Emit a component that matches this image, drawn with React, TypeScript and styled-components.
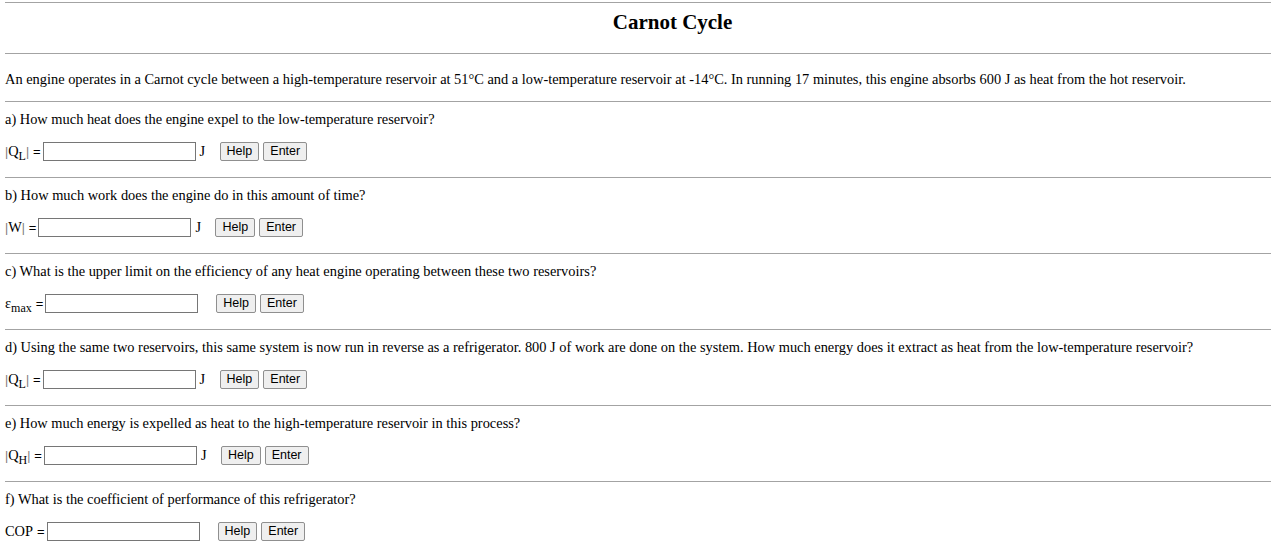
import React, {FC, ReactNode} from 'react';
import styled, {createGlobalStyle} from 'styled-components';

const GlobalStyle = createGlobalStyle`
    html, body {
        margin: 0;
        padding: 0;
        background: #ffffff;
        overflow: hidden;
    }
    body {
        font-family: 'Liberation Serif', 'Times New Roman', serif;
        font-size: 14.4px;
        color: #000000;
    }
`;

const Page = styled.div`
    width: 1335px;
    padding-left: 5px;
    padding-top: 2px;
`;

const Rule = styled.div`
    height: 0;
    border-top: 1px solid #a3a3a3;
`;

const Title = styled.h1`
    margin: 0;
    padding-top: 6px;
    height: 44px;
    font-size: 21px;
    line-height: 26px;
    font-weight: bold;
    text-align: center;
`;

const Intro = styled.p`
    margin: 0;
    padding: 13px 0 10px;
    line-height: 24px;
`;

const Section = styled.section`
    padding: 7px 0 16px;
    display: flex;
    flex-direction: column;
    gap: 12px;
`;

const Question = styled.div`
    line-height: 20px;
    height: 20px;
    white-space: nowrap;
`;

const Row = styled.div`
    display: flex;
    align-items: center;
    height: 20px;
`;

const Label = styled.span`
    display: inline-block;
    white-space: nowrap;
    line-height: 20px;

    sub {
        font-size: 12px;
        vertical-align: -4px;
        line-height: 0;
    }
`;

const Bar = styled.span`
    font-family: 'Liberation Sans', Arial, sans-serif;
    font-size: 12px;
    color: #777;
`;

const Equals = styled.span`
    font-family: 'Liberation Sans', Arial, sans-serif;
    font-size: 13px;
    margin: 0 2px 0 4px;
`;

const Field = styled.input`
    box-sizing: border-box;
    width: 153px;
    height: 19px;
    margin: 0;
    padding: 1px 2px;
    border: 1px solid #767676;
    border-radius: 0;
    background: #fff;
    font-family: 'Liberation Sans', Arial, sans-serif;
    font-size: 13px;
`;

const Unit = styled.span<{$empty: boolean}>`
    width: ${({$empty}) => ($empty ? 18 : 24)}px;
    padding-left: 4px;
    box-sizing: border-box;
`;

const Buttons = styled.span`
    display: inline-flex;
    gap: 4px;
`;

const Button = styled.button`
    box-sizing: border-box;
    height: 19px;
    margin: 0;
    padding: 0 6px;
    border: 1px solid #8f8f8f;
    border-radius: 2px;
    background: #efefef;
    font-family: 'Liberation Sans', Arial, sans-serif;
    font-size: 12.5px;
    line-height: 17px;
    color: #000;
    cursor: pointer;
`;

type Part = {
    question: ReactNode;
    label: ReactNode;
    unit?: string;
};

const abs = (sym: ReactNode) => (
    <>
        <Bar>|</Bar>
        {sym}
        <Bar>|</Bar>
    </>
);

const parts: Part[] = [
    {
        question: 'a) How much heat does the engine expel to the low-temperature reservoir?',
        label: abs(<>Q<sub>L</sub></>),
        unit: 'J',
    },
    {
        question: 'b) How much work does the engine do in this amount of time?',
        label: abs('W'),
        unit: 'J',
    },
    {
        question: 'c) What is the upper limit on the efficiency of any heat engine operating between these two reservoirs?',
        label: <>ε<sub>max</sub></>,
    },
    {
        question:
            'd) Using the same two reservoirs, this same system is now run in reverse as a refrigerator. 800 J of work are done on the system. How much energy does it extract as heat from the low-temperature reservoir?',
        label: abs(<>Q<sub>L</sub></>),
        unit: 'J',
    },
    {
        question: 'e) How much energy is expelled as heat to the high-temperature reservoir in this process?',
        label: abs(<>Q<sub>H</sub></>),
        unit: 'J',
    },
    {
        question: 'f) What is the coefficient of performance of this refrigerator?',
        label: 'COP',
    },
];

const AnswerRow: FC<{part: Part}> = ({part}) => (
    <Row>
        <Label>{part.label}</Label>
        <Equals>=</Equals>
        <Field type='text' />
        <Unit $empty={!part.unit}>{part.unit ?? ''}</Unit>
        <Buttons>
            <Button>Help</Button>
            <Button>Enter</Button>
        </Buttons>
    </Row>
);

const App: FC = () => (
    <>
        <GlobalStyle />
        <Page>
            <Rule />
            <Title>Carnot Cycle</Title>
            <Rule />
            <Intro>
                An engine operates in a Carnot cycle between a high-temperature reservoir at 51°C and a
                low-temperature reservoir at -14°C. In running 17 minutes, this engine absorbs 600 J as heat from
                the hot reservoir.
            </Intro>
            {parts.map((part, i) => (
                <React.Fragment key={i}>
                    <Rule />
                    <Section>
                        <Question>{part.question}</Question>
                        <AnswerRow part={part} />
                    </Section>
                </React.Fragment>
            ))}
        </Page>
    </>
);

export default App;
